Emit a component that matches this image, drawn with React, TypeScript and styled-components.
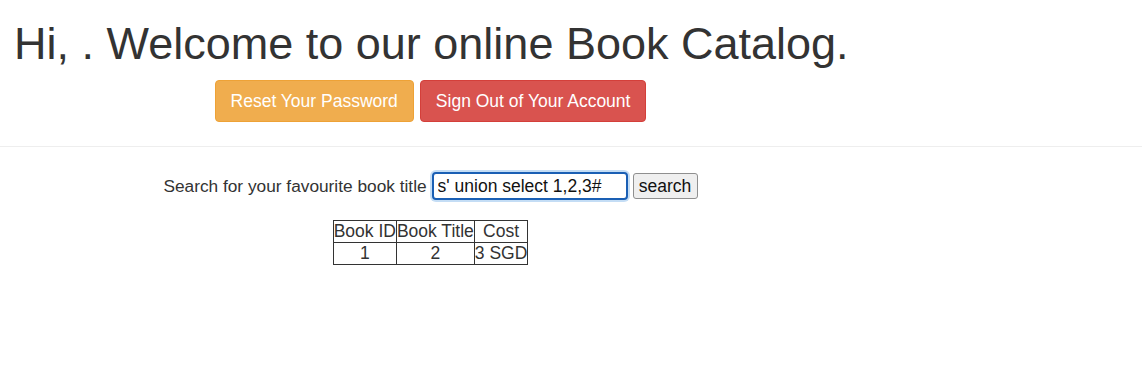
import React from "react";
import styled, { createGlobalStyle } from "styled-components";

const Global = createGlobalStyle`
  html, body { margin: 0; padding: 0; background: #fff; }
  body { font-family: "Liberation Sans", Arial, sans-serif; color: #333; }
`;

const Page = styled.div`
  width: 1142px;
`;

const Column = styled.div`
  width: 861px;
  text-align: center;
`;

const Title = styled.h1`
  margin: 0;
  padding: 17px 0 0 14px;
  text-align: left;
  white-space: nowrap;
  font-weight: 400;
  font-size: 45px;
  line-height: 53px;
  color: #333;
`;

const Actions = styled.p`
  margin: 10px 0 0;
  display: flex;
  justify-content: center;
  gap: 6px;
`;

const Button = styled.a<{ $tone: "warning" | "danger" }>`
  display: inline-block;
  height: 42px;
  box-sizing: border-box;
  padding: 0 15px;
  line-height: 40px;
  font-size: 17.5px;
  color: #fff;
  text-decoration: none;
  border-radius: 4px;
  border: 1px solid ${(p) => (p.$tone === "warning" ? "#eea236" : "#d43f3a")};
  background: ${(p) => (p.$tone === "warning" ? "#f0ad4e" : "#d9534f")};
`;

const Rule = styled.hr`
  margin: 24px 0 0;
  border: 0;
  border-top: 1px solid #eee;
`;

const SearchForm = styled.form`
  margin-top: 25px;
  display: flex;
  justify-content: center;
  align-items: center;
  gap: 5px;
  font-size: 17.5px;
`;

const Label = styled.label`
  color: #333;
  font-size: 17.3px;
`;

const Input = styled.input`
  width: 196px;
  height: 28px;
  box-sizing: border-box;
  padding: 1px 4px;
  font-family: "Liberation Sans", Arial, sans-serif;
  font-size: 17.5px;
  color: #111;
  border: 2px solid #1a5fb4;
  border-radius: 4px;
  outline: none;
  box-shadow: 0 0 0 2px #c4ddf5;
`;

const SearchButton = styled.button`
  height: 26px;
  width: 65px;
  padding: 0;
  font-family: "Liberation Sans", Arial, sans-serif;
  font-size: 17.5px;
  color: #111;
  background: #efefef;
  border: 1px solid #8f8f8f;
  border-radius: 3px;
`;

const Table = styled.table`
  margin: 20px auto 0;
  border-collapse: collapse;
  font-size: 17.5px;
  color: #333;
`;

const Cell = styled.td`
  border: 1px solid #333;
  padding: 0;
  height: 21px;
  line-height: 21px;
  text-align: center;
`;

const Head = styled(Cell).attrs({ as: "th" })`
  font-weight: 400;
`;

export default function App() {
  return (
    <Page>
      <Global />
      <Column>
        <Title>Hi, . Welcome to our online Book Catalog.</Title>
        <Actions>
          <Button $tone="warning" href="#">Reset Your Password</Button>
          <Button $tone="danger" href="#">Sign Out of Your Account</Button>
        </Actions>
      </Column>
      <Rule />
      <Column>
        <SearchForm onSubmit={(e) => e.preventDefault()}>
          <Label>Search for your favourite book title</Label>
          <Input defaultValue="s' union select 1,2,3#" />
          <SearchButton type="submit">search</SearchButton>
        </SearchForm>
        <Table>
          <thead>
            <tr>
              <Head>Book ID</Head>
              <Head>Book Title</Head>
              <Head>Cost</Head>
            </tr>
          </thead>
          <tbody>
            <tr>
              <Cell>1</Cell>
              <Cell>2</Cell>
              <Cell>3 SGD</Cell>
            </tr>
          </tbody>
        </Table>
      </Column>
    </Page>
  );
}
